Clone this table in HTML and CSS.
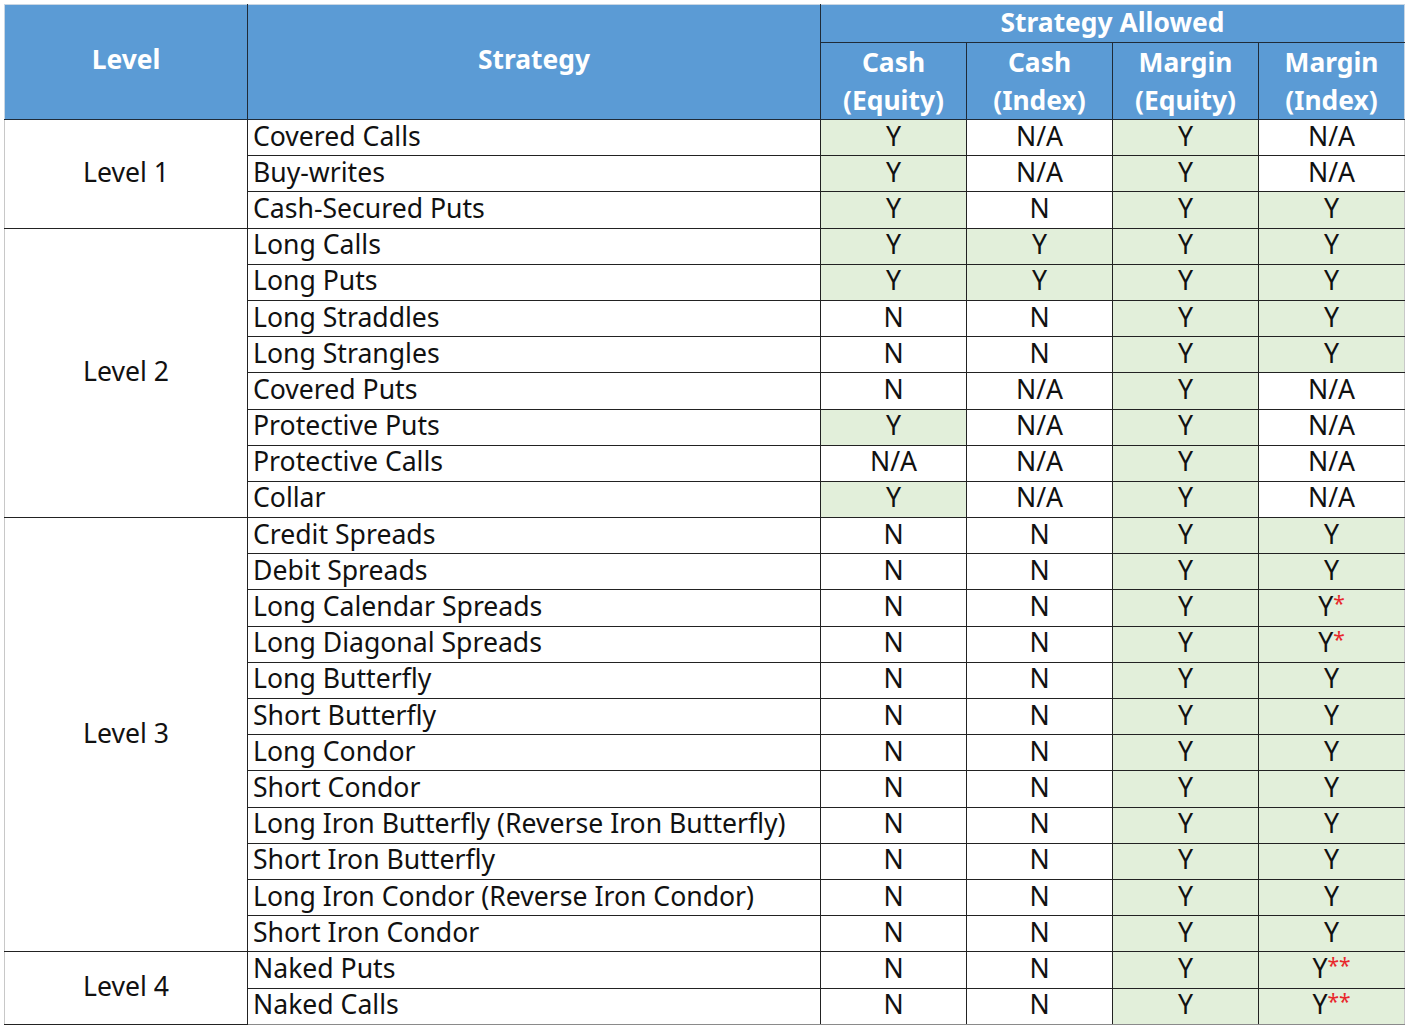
FILE: index.html
```html
<!DOCTYPE html>
<html>
<head>
<meta charset="utf-8">
<link rel="stylesheet" href="styles.css">
</head>
<body>
<table class="grid">
  <colgroup>
    <col class="c-level"><col class="c-strat"><col class="c-val"><col class="c-val"><col class="c-val"><col class="c-val">
  </colgroup>
  <thead>
    <tr class="h1">
      <th rowspan="2" class="hl">Level</th>
      <th rowspan="2">Strategy</th>
      <th colspan="4">Strategy Allowed</th>
    </tr>
    <tr class="h2">
      <th>Cash<br>(Equity)</th>
      <th>Cash<br>(Index)</th>
      <th>Margin<br>(Equity)</th>
      <th class="hr">Margin<br>(Index)</th>
    </tr>
  </thead>
  <tbody>
    <tr><td rowspan="3" class="lvl">Level 1</td><td class="s">Covered Calls</td><td class="g">Y</td><td>N/A</td><td class="g">Y</td><td class="r">N/A</td></tr>
    <tr><td class="s">Buy-writes</td><td class="g">Y</td><td>N/A</td><td class="g">Y</td><td class="r">N/A</td></tr>
    <tr><td class="s">Cash-Secured Puts</td><td class="g">Y</td><td>N</td><td class="g">Y</td><td class="g r">Y</td></tr>
    <tr><td rowspan="8" class="lvl">Level 2</td><td class="s">Long Calls</td><td class="g">Y</td><td class="g">Y</td><td class="g">Y</td><td class="g r">Y</td></tr>
    <tr><td class="s">Long Puts</td><td class="g">Y</td><td class="g">Y</td><td class="g">Y</td><td class="g r">Y</td></tr>
    <tr><td class="s">Long Straddles</td><td>N</td><td>N</td><td class="g">Y</td><td class="g r">Y</td></tr>
    <tr><td class="s">Long Strangles</td><td>N</td><td>N</td><td class="g">Y</td><td class="g r">Y</td></tr>
    <tr><td class="s">Covered Puts</td><td>N</td><td>N/A</td><td class="g">Y</td><td class="r">N/A</td></tr>
    <tr><td class="s">Protective Puts</td><td class="g">Y</td><td>N/A</td><td class="g">Y</td><td class="r">N/A</td></tr>
    <tr><td class="s">Protective Calls</td><td>N/A</td><td>N/A</td><td class="g">Y</td><td class="r">N/A</td></tr>
    <tr><td class="s">Collar</td><td class="g">Y</td><td>N/A</td><td class="g">Y</td><td class="r">N/A</td></tr>
    <tr><td rowspan="12" class="lvl">Level 3</td><td class="s">Credit Spreads</td><td>N</td><td>N</td><td class="g">Y</td><td class="g r">Y</td></tr>
    <tr><td class="s">Debit Spreads</td><td>N</td><td>N</td><td class="g">Y</td><td class="g r">Y</td></tr>
    <tr><td class="s">Long Calendar Spreads</td><td>N</td><td>N</td><td class="g">Y</td><td class="g r">Y<span class="ast">*</span></td></tr>
    <tr><td class="s">Long Diagonal Spreads</td><td>N</td><td>N</td><td class="g">Y</td><td class="g r">Y<span class="ast">*</span></td></tr>
    <tr><td class="s">Long Butterfly</td><td>N</td><td>N</td><td class="g">Y</td><td class="g r">Y</td></tr>
    <tr><td class="s">Short Butterfly</td><td>N</td><td>N</td><td class="g">Y</td><td class="g r">Y</td></tr>
    <tr><td class="s">Long Condor</td><td>N</td><td>N</td><td class="g">Y</td><td class="g r">Y</td></tr>
    <tr><td class="s">Short Condor</td><td>N</td><td>N</td><td class="g">Y</td><td class="g r">Y</td></tr>
    <tr><td class="s">Long Iron Butterfly (Reverse Iron Butterfly)</td><td>N</td><td>N</td><td class="g">Y</td><td class="g r">Y</td></tr>
    <tr><td class="s">Short Iron Butterfly</td><td>N</td><td>N</td><td class="g">Y</td><td class="g r">Y</td></tr>
    <tr><td class="s">Long Iron Condor (Reverse Iron Condor)</td><td>N</td><td>N</td><td class="g">Y</td><td class="g r">Y</td></tr>
    <tr><td class="s">Short Iron Condor</td><td>N</td><td>N</td><td class="g">Y</td><td class="g r">Y</td></tr>
    <tr><td rowspan="2" class="lvl">Level 4</td><td class="s">Naked Puts</td><td>N</td><td>N</td><td class="g">Y</td><td class="g r">Y<span class="ast">**</span></td></tr>
    <tr><td class="s">Naked Calls</td><td>N</td><td>N</td><td class="g">Y</td><td class="g r">Y<span class="ast">**</span></td></tr>
  </tbody>
</table>
</body>
</html>
```
FILE: styles.css
```css
html, body {
  margin: 0;
  padding: 0;
  background: #ffffff;
}
body {
  padding: 4px 0 0 4px;
  font-family: "Noto Sans", "Open Sans", sans-serif;
}
.grid {
  border-collapse: collapse;
  table-layout: fixed;
  width: 1400px;
  color: #111111;
}
.c-level { width: 243px; }
.c-strat { width: 573px; }
.c-val { width: 146px; }
th {
  background: #5b9bd5;
  color: #ffffff;
  font-weight: 700;
  font-size: 26.4px;
  border: 1px solid #1f2b38;
  padding: 0;
  border-top: 1px solid #c9d6e3;
}
th.hl { border-left: 1px solid #c9d6e3; }
th.hr { border-right: 1px solid #c9d6e3; }
.h1 th[colspan] { border-right: 1px solid #c9d6e3; }
.h1 { height: 38px; }
.h1 th { line-height: 30px; padding-bottom: 4px; }
.h1 th[rowspan] { line-height: 36px; padding-bottom: 6px; }
.h2 { height: 77px; }
.h2 th { border-top: 1px solid #1f2b38; line-height: 38px; padding-bottom: 0; }
tbody tr { height: 36.2px; }
td {
  border: 1px solid #222222;
  padding: 0 0 4px 0;
  font-size: 26.6px;
  line-height: 30px;
  text-align: center;
  white-space: nowrap;
}
td.s {
  text-align: left;
  padding-left: 5px;
}
td.lvl {
  border-left: 1px solid #c8c8c8;
}
td.r { border-right: 1px solid #c8c8c8; }
td.g { background: #e2efda; }
tbody tr:last-child td { border-bottom: 1px solid #8a8a8a; }
.ast {
  color: #e8282b;
  font-size: 21px;
  line-height: 0;
  vertical-align: 5px;
}
```
